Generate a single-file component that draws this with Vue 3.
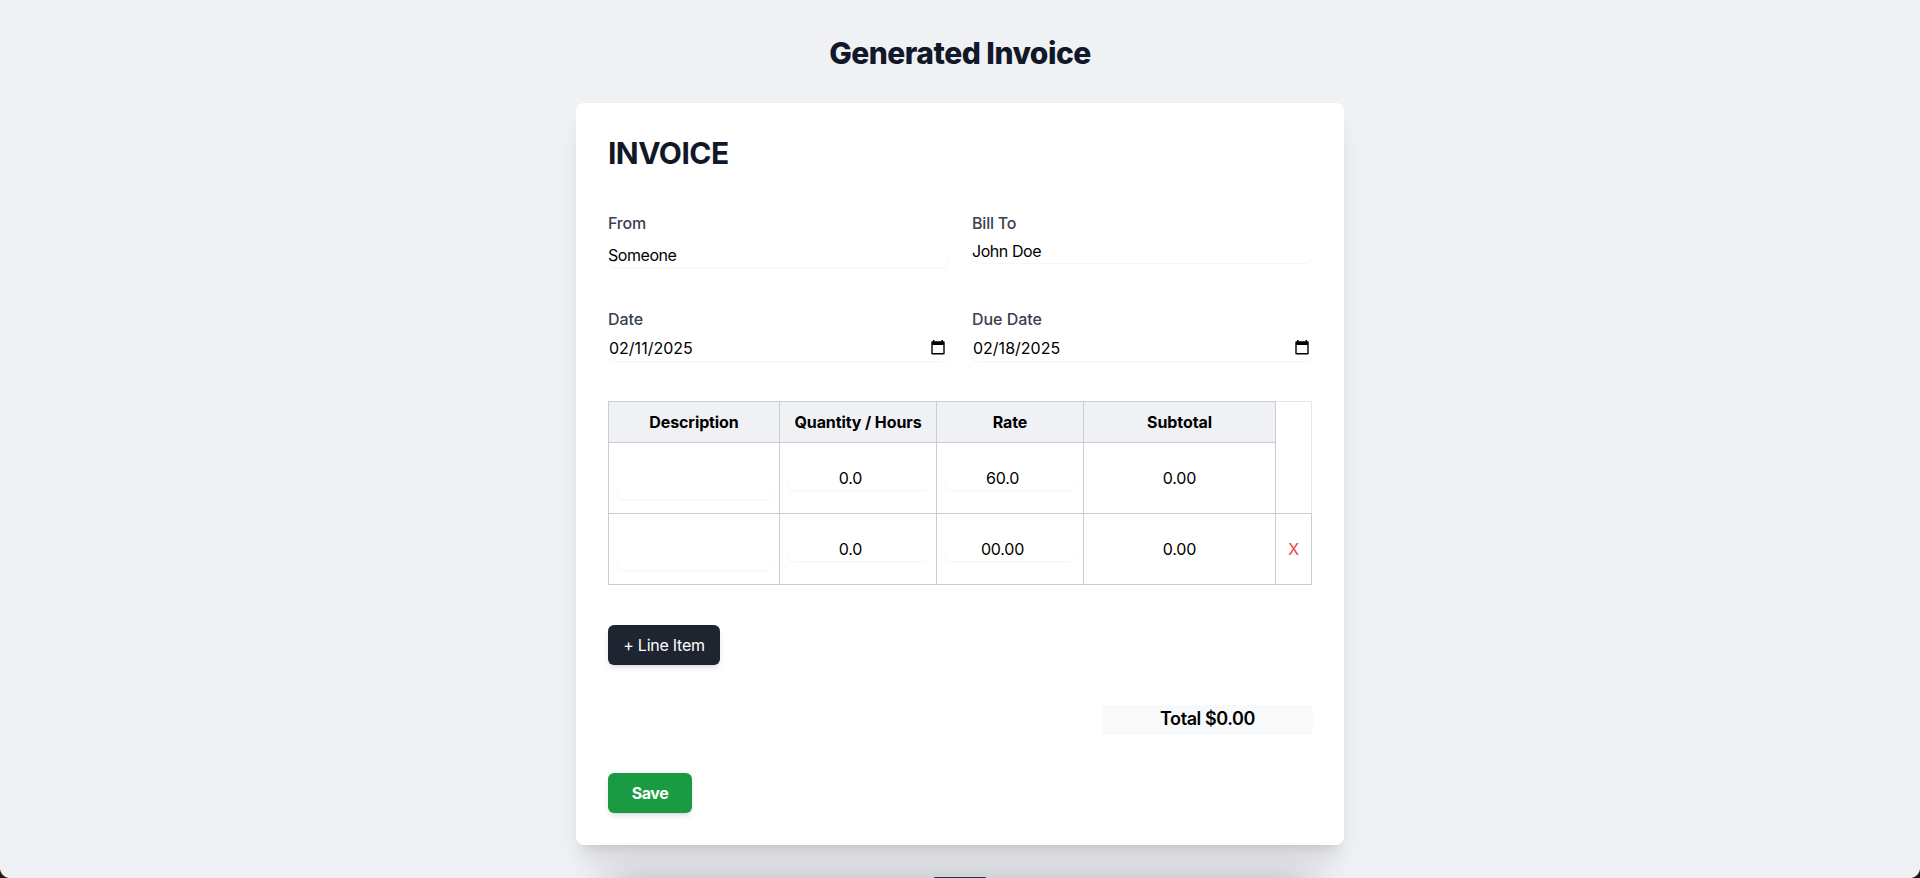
<script setup>
import { ref } from 'vue'

const from = ref('Someone')
const billTo = ref('John Doe')
const items = ref([
  { quantity: '0.0', rate: '60.0', subtotal: '0.00' },
  { quantity: '0.0', rate: '00.00', subtotal: '0.00' },
])
const dates = [
  { label: 'Date', value: '02/11/2025' },
  { label: 'Due Date', value: '02/18/2025' },
]
</script>

<template>
  <div class="page">
    <h1 class="title">Generated Invoice</h1>
    <main class="card">
      <h2 class="heading">INVOICE</h2>
      <section class="fields">
        <div class="field">
          <label>From</label>
          <input v-model="from" class="control from" />
        </div>
        <div class="field">
          <label>Bill To</label>
          <input v-model="billTo" class="control bill" />
        </div>
      </section>
      <section class="fields dates">
        <div v-for="d in dates" :key="d.label" class="field">
          <label>{{ d.label }}</label>
          <div class="control date">
            <span>{{ d.value }}</span>
            <svg width="14" height="15" viewBox="0 0 14 15">
              <path fill-rule="evenodd" d="M2 0h1.5v1.2h7V0H12v1.2h.5c.8 0 1.2.5 1.2 1.2v10.8c0 .8-.4 1.3-1.2 1.3h-11C.8 14.500.3 14 .3 13.200V2.400C.3 1.700.8 1.200 1.500 1.200H2zM1.700 5v8.100h10.600V5z" />
            </svg>
          </div>
        </div>
      </section>
      <table class="items">
        <colgroup>
          <col class="c-desc" /><col class="c-qty" /><col class="c-rate" /><col class="c-sub" /><col class="c-del" />
        </colgroup>
        <thead>
          <tr>
            <th>Description</th>
            <th>Quantity / Hours</th>
            <th>Rate</th>
            <th>Subtotal</th>
            <td class="blank"></td>
          </tr>
        </thead>
        <tbody>
          <tr v-for="(item, i) in items" :key="i">
            <td><div class="control area"></div></td>
            <td><div class="control number">{{ item.quantity }}</div></td>
            <td><div class="control number">{{ item.rate }}</div></td>
            <td>{{ item.subtotal }}</td>
            <td v-if="i > 0" class="remove">X</td>
            <td v-else class="blank"></td>
          </tr>
        </tbody>
      </table>
      <button class="btn add">+ Line Item</button>
      <div class="total">Total $0.00</div>
      <button class="btn save">Save</button>
    </main>
    <div class="bottom-shade"></div>
    <div class="dock-tab"></div>
    <div class="corner left"></div>
    <div class="corner right"></div>
  </div>
</template>

<style>
html,
body {
  margin: 0;
  background: #f0f1f5;
  overflow: hidden;
}
</style>

<style scoped>
.page {
  position: relative;
  box-sizing: border-box;
  height: 878px;
  padding-top: 33px;
  overflow: hidden;
  background: #f0f1f5;
  color: #000;
  font-family: Inter, "Liberation Sans", sans-serif;
  font-size: 16px;
  line-height: 24px;
}
.title {
  margin: 0 0 30px;
  text-align: center;
  font-size: 30px;
  line-height: 40px;
  font-weight: 800;
  letter-spacing: -0.5px;
  color: #111827;
}
.card {
  position: relative;
  box-sizing: border-box;
  display: flex;
  flex-direction: column;
  width: 768px;
  height: 742px;
  margin: 0 auto;
  padding: 32px;
  border-radius: 8px;
  background: #fff;
  box-shadow: 0 20px 25px -5px rgba(0, 0, 0, 0.1), 0 8px 10px -6px rgba(0, 0, 0, 0.1);
}
.heading {
  margin: 0 0 40px;
  font-size: 30px;
  line-height: 36px;
  font-weight: 700;
  letter-spacing: -0.55px;
  color: #111827;
}
.fields {
  display: grid;
  grid-template-columns: 1fr 1fr;
  gap: 24px;
  height: 100px;
}
.fields.dates {
  height: 98px;
}
.field label {
  display: block;
  height: 24px;
  color: #374151;
  font-weight: 500;
  letter-spacing: -0.2px;
}
.dates .field label {
  letter-spacing: -0.05px;
}
.control {
  box-sizing: border-box;
  border: 0;
  border-radius: 6px;
  outline: 0;
  background: transparent;
  box-shadow: 0 1px 2px rgba(0, 0, 0, 0.05);
}
input.control {
  display: block;
  width: 100%;
  height: 24px;
  padding: 0;
  font: inherit;
  color: inherit;
  letter-spacing: -0.45px;
}
.from {
  margin-top: 8px;
}
.bill {
  margin-top: 4px;
}
.date {
  display: flex;
  align-items: center;
  justify-content: space-between;
  height: 26px;
  margin-top: 4px;
  padding: 0 3px 0 1px;
}
.items {
  width: 704px;
  flex: none;
  margin: 0 0 40px;
  table-layout: fixed;
  border-collapse: collapse;
  border: 1px solid #e5e7eb;
  text-align: center;
}
.c-desc { width: 171px; }
.c-qty { width: 157px; }
.c-rate { width: 147px; }
.c-sub { width: 192px; }
.c-del { width: 36px; }
.items th,
.items td {
  box-sizing: border-box;
  height: 71px;
  padding: 0 8px;
  border: 1px solid #c8cdd5;
}
.items tbody td {
  letter-spacing: -0.2px;
}
.items th {
  height: 41px;
  padding: 0;
  background: #f0f1f5;
  font-weight: 700;
  letter-spacing: -0.1px;
}
.items thead .blank {
  height: 41px;
}
.items .blank {
  border-color: #e5e7eb;
  border-left-color: #c8cdd5;
}
.items thead .blank {
  border-bottom: 0;
}
.items tbody .blank {
  border-top: 0;
  border-bottom-color: #c8cdd5;
}
.items td.remove {
  padding: 0;
  color: #ef4444;
}
.area {
  height: 48px;
  margin-top: -7px;
}
.number {
  height: 24px;
  padding-right: 15px;
}
.btn {
  align-self: flex-start;
  flex: none;
  height: 40px;
  padding: 0;
  border: 0;
  border-radius: 6px;
  color: #fff;
  font: inherit;
  letter-spacing: -0.25px;
  box-shadow: 0 4px 6px -1px rgba(0, 0, 0, 0.1), 0 2px 4px -2px rgba(0, 0, 0, 0.1);
}
.add {
  width: 112px;
  background: #1f2530;
}
.total {
  align-self: flex-end;
  flex: none;
  width: 209px;
  height: 28px;
  margin: 40px 0;
  background: #f8f9fb;
  box-shadow: 0 1px 2px rgba(0, 0, 0, 0.05);
  font-size: 18px;
  line-height: 28px;
  font-weight: 600;
  letter-spacing: -0.42px;
  text-align: center;
}
.save {
  width: 84px;
  background: #1a9b43;
  font-weight: 700;
  letter-spacing: -0.4px;
}
.bottom-shade {
  position: absolute;
  left: 610px;
  top: 882px;
  width: 700px;
  height: 60px;
  box-shadow: 0 0 40px 0 rgba(0, 0, 0, 0.3);
}
.dock-tab {
  position: absolute;
  left: 934px;
  top: 877px;
  width: 52px;
  height: 10px;
  border-radius: 1px;
  background: #29304f;
}
.corner {
  position: absolute;
  bottom: 0;
  width: 10px;
  height: 10px;
}
.left {
  left: 0;
  background: radial-gradient(circle at 100% 0, transparent 9.500px, #2c1608 10.500px);
}
.right {
  right: 0;
  background: radial-gradient(circle at 0 0, transparent 9.500px, #14190b 10.500px);
}
</style>
